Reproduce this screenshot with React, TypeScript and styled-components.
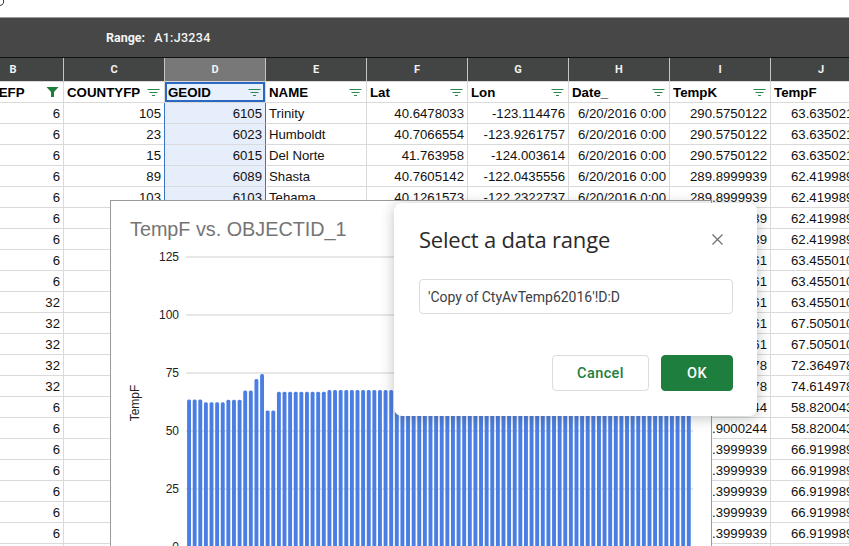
import React from 'react';
import styled, { createGlobalStyle } from 'styled-components';

const GlobalStyle = createGlobalStyle`
    html, body {
        margin: 0;
        padding: 0;
        overflow: hidden;
        background: #fff;
    }
`;

const Page = styled.div`
    position: relative;
    width: 849px;
    height: 546px;
    overflow: hidden;
    background: #fff;
    font-family: "Liberation Sans", Arial, sans-serif;
`;

const TopStrip = styled.div`
    height: 17px;
    border-bottom: 1px solid #9c9c9c;
    & svg {
        display: block;
    }
`;

const FilterBar = styled.div`
    display: flex;
    align-items: center;
    gap: 9px;
    height: 39px;
    padding-left: 106px;
    background: #464746;
    border-bottom: 1px solid #111;
    font-family: Roboto, sans-serif;
    font-size: 12.5px;
    color: #f4f4f4;
    & b {
        font-weight: 700;
    }
    & span {
        font-weight: 500;
        letter-spacing: 0.3px;
    }
`;

const Table = styled.table`
    width: 909px;
    margin-left: -37px;
    table-layout: fixed;
    border-collapse: separate;
    border-spacing: 0;
    font-size: 13.2px;
    color: #111;
`;

const LetterCell = styled.th<{ $selected?: boolean }>`
    height: 23px;
    padding: 0;
    box-sizing: content-box;
    background: ${(p) => (p.$selected ? '#777877' : '#434544')};
    border-right: 1px solid #c4c4c4;
    border-bottom: 1px solid #d8d8d8;
    font-family: Roboto, sans-serif;
    font-size: 11px;
    font-weight: 700;
    color: #f2f2f2;
    text-align: center;
`;

const NameCell = styled.th<{ $selected?: boolean }>`
    height: 20px;
    padding: 0 4px 0 3px;
    box-sizing: content-box;
    background: ${(p) => (p.$selected ? '#e8f0fe' : '#fff')};
    border-right: 1px solid #dadada;
    border-bottom: 1px solid #dadada;
    text-align: left;
    font-size: 13.3px;
    color: #000;
    ${(p) => p.$selected && 'box-shadow: inset 0 0 0 2px #2a68c2;'}
`;

const NameInner = styled.div`
    display: flex;
    align-items: center;
    justify-content: space-between;
    overflow: hidden;
    white-space: nowrap;
`;

const DataCell = styled.td<{ $selected?: boolean; $text?: boolean }>`
    height: 20px;
    padding: 0 3px;
    box-sizing: content-box;
    overflow: hidden;
    white-space: nowrap;
    text-align: ${(p) => (p.$text ? 'left' : 'right')};
    background: ${(p) => (p.$selected ? '#e6edfb' : '#fff')};
    border-right: 1px solid ${(p) => (p.$selected ? '#3b72c4' : '#dadada')};
    border-bottom: 1px solid #dadada;
    ${(p) => p.$selected && 'box-shadow: -1px 0 0 #3b72c4;'}
`;

const ChartPanel = styled.section`
    position: absolute;
    left: 110px;
    top: 200px;
    width: 600px;
    height: 360px;
    background: #fff;
    border: 1px solid #9a9a9a;
`;

const ChartTitle = styled.h2`
    margin: 16px 0 0 19px;
    font-size: 19.8px;
    line-height: 24px;
    font-weight: 400;
    color: #757575;
`;

const Plot = styled.svg`
    display: block;
    font-family: "Liberation Sans", Arial, sans-serif;
    font-size: 12px;
    fill: #222;
`;

const Dialog = styled.div`
    position: absolute;
    left: 394px;
    top: 203px;
    width: 363px;
    height: 213px;
    box-sizing: border-box;
    padding: 21px 24px 25px 25px;
    display: flex;
    flex-direction: column;
    background: #fff;
    border-radius: 8px;
    box-shadow: 0 2px 14px rgba(60, 64, 67, 0.32);
    font-family: Roboto, sans-serif;
`;

const DialogHead = styled.div`
    display: flex;
    align-items: center;
    justify-content: space-between;
    height: 30px;
    padding-right: 10px;
    & h3 {
        margin: 0;
        font-family: "Open Sans", Roboto, sans-serif;
        font-size: 22px;
        font-weight: 400;
        letter-spacing: -0.2px;
        color: #2a2a2a;
    }
    & svg {
        display: block;
    }
`;

const RangeInput = styled.div`
    margin-top: 25px;
    height: 35px;
    box-sizing: border-box;
    padding-left: 8px;
    display: flex;
    align-items: center;
    border: 1px solid #dadce0;
    border-radius: 4px;
    font-size: 14px;
    color: #3c4043;
`;

const DialogActions = styled.div`
    margin-top: auto;
    display: flex;
    justify-content: flex-end;
    gap: 12px;
`;

const ActionButton = styled.button<{ $primary?: boolean }>`
    height: 36px;
    width: ${(p) => (p.$primary ? '72px' : '97px')};
    padding: 0;
    border-radius: 4px;
    border: 1px solid ${(p) => (p.$primary ? '#1e7e3e' : '#dadce0')};
    background: ${(p) => (p.$primary ? '#1e7e3e' : '#fff')};
    color: ${(p) => (p.$primary ? '#fff' : '#1e7e3e')};
    font-family: Roboto, sans-serif;
    font-size: 14.5px;
    font-weight: 500;
    letter-spacing: 0.4px;
`;

const FilterLines: React.FC = () => (
    <svg width="13" height="9" viewBox="0 0 13 9" fill="none" stroke="#2a8a4e" strokeWidth="1">
        <path d="M0.5 1.5h12M2.5 4.5h8M5 7.5h3" />
    </svg>
);

const FilterFunnel: React.FC = () => (
    <svg width="13" height="10" viewBox="0 0 13 10" fill="#1e7e3e">
        <path d="M0.5 0h12L8 5v5H5V5z" />
    </svg>
);

const columns = ['B', 'C', 'D', 'E', 'F', 'G', 'H', 'I', 'J'];
const names = ['STATEFP', 'COUNTYFP', 'GEOID', 'NAME', 'Lat', 'Lon', 'Date_', 'TempK', 'TempF'];

const topRows = [
    ['105', '6105', 'Trinity', '40.6478033', '-123.114476'],
    ['23', '6023', 'Humboldt', '40.7066554', '-123.9261757'],
    ['15', '6015', 'Del Norte', '41.763958', '-124.003614'],
    ['89', '6089', 'Shasta', '40.7605142', '-122.0435556'],
    ['103', '6103', 'Tehama', '40.1261573', '-122.2322737'],
];

const temps: [string, string, string, number][] = [
    ['6', '290.5750122', '63.63502197', 3],
    ['6', '289.8999939', '62.41998901', 4],
    ['6', '290.4750061', '63.45501099', 2],
    ['32', '290.4750061', '63.45501099', 1],
    ['32', '292.7250061', '67.50501099', 2],
    ['32', '295.4249878', '72.36497803', 1],
    ['32', '296.6749878', '74.61497803', 1],
    ['6', '287.9000244', '58.82004395', 2],
    ['6', '292.3999939', '66.91998901', 6],
];

const rows = temps.flatMap(([b, k, f, n]) => Array.from({ length: n }, () => ({ b, k, f })));

const barValues = [
    63.6, 63.6, 63.6, 62.4, 62.4, 62.4, 62.4, 63.45, 63.45, 63.45, 67.5, 67.5, 72.36, 74.6, 58.8, 58.8,
    ...Array.from({ length: 9 }, () => 66.9),
    ...Array.from({ length: 65 }, () => 67.7),
];

const ticks = [125, 100, 75, 50, 25, 0];

// plot coords start right under the title, y = 241 on the page
const yOf = (v: number) => 306 - v * 2.32;

const TempChart: React.FC = () => (
    <ChartPanel>
        <ChartTitle>TempF vs. OBJECTID_1</ChartTitle>
        <Plot width="600" height="318">
            {ticks.map((t) => (
                <g key={t}>
                    <line x1="75" x2="582" y1={yOf(t)} y2={yOf(t)} stroke="#cfcfcf" />
                    <text x="68" y={yOf(t) + 4} textAnchor="end">{t}</text>
                </g>
            ))}
            <text transform="translate(28 162) rotate(-90)" textAnchor="middle">TempF</text>
            {barValues.map((v, i) => (
                <rect key={i} x={76.1 + i * 5.615} y={yOf(v)} width="3.9" height={v * 2.32} rx="1.5" fill="#4a7ee3" />
            ))}
        </Plot>
    </ChartPanel>
);

const App: React.FC = () => {
    return (
        <Page>
            <GlobalStyle />
            <TopStrip>
                <svg width="8" height="8" viewBox="0 0 8 8" fill="none" stroke="#333" strokeWidth="1">
                    <path d="M3.5 0c.6 3-.4 5-3.5 5.5" />
                </svg>
            </TopStrip>
            <FilterBar>
                <b>Range:</b>
                <span>A1:J3234</span>
            </FilterBar>
            <Table>
                <colgroup>
                    {columns.map((c) => (
                        <col key={c} width="101" />
                    ))}
                </colgroup>
                <thead>
                    <tr>
                        {columns.map((c) => (
                            <LetterCell key={c} $selected={c === 'D'}>{c}</LetterCell>
                        ))}
                    </tr>
                    <tr>
                        {names.map((n, i) => (
                            <NameCell key={n} $selected={n === 'GEOID'}>
                                <NameInner>
                                    <span>{n}</span>
                                    {i === 0 ? <FilterFunnel /> : i < 8 ? <FilterLines /> : null}
                                </NameInner>
                            </NameCell>
                        ))}
                    </tr>
                </thead>
                <tbody>
                    {rows.map((r, i) => {
                        const top = topRows[i];
                        return (
                            <tr key={i}>
                                <DataCell>{r.b}</DataCell>
                                <DataCell>{top?.[0]}</DataCell>
                                <DataCell $selected>{top?.[1]}</DataCell>
                                <DataCell $text>{top?.[2]}</DataCell>
                                <DataCell>{top?.[3]}</DataCell>
                                <DataCell>{top?.[4]}</DataCell>
                                <DataCell>{top ? '6/20/2016 0:00' : ''}</DataCell>
                                <DataCell>{r.k}</DataCell>
                                <DataCell>{r.f}</DataCell>
                            </tr>
                        );
                    })}
                </tbody>
            </Table>
            <TempChart />
            <Dialog>
                <DialogHead>
                    <h3>Select a data range</h3>
                    <svg width="11" height="11" viewBox="0 0 11 11" stroke="#6f7175" strokeWidth="1.3">
                        <path d="M0.5 0.5l10 10M10.5 0.5l-10 10" />
                    </svg>
                </DialogHead>
                <RangeInput>'Copy of CtyAvTemp62016'!D:D</RangeInput>
                <DialogActions>
                    <ActionButton>Cancel</ActionButton>
                    <ActionButton $primary>OK</ActionButton>
                </DialogActions>
            </Dialog>
        </Page>
    );
};

export default App;
